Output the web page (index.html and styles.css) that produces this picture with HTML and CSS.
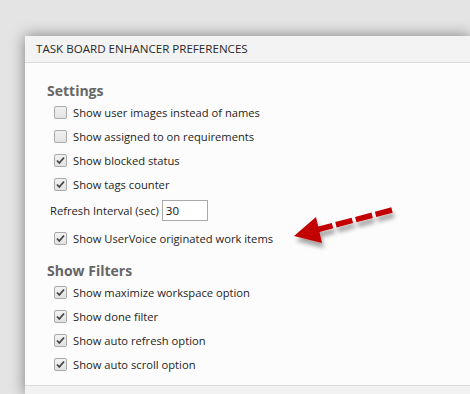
FILE: index.html
```html
<!DOCTYPE html>
<html lang="en">
<head>
    <meta charset="UTF-8">
    <title>Task Board Enhancer Preferences</title>
    <link rel="stylesheet" href="styles.css">
</head>
<body>
    <div class="dialog">
        <div class="dialog-header">TASK BOARD ENHANCER PREFERENCES</div>

        <div class="dialog-body">
            <h2>Settings</h2>
            <label class="option"><input type="checkbox"> Show user images instead of names</label>
            <label class="option"><input type="checkbox"> Show assigned to on requirements</label>
            <label class="option"><input type="checkbox" checked> Show blocked status</label>
            <label class="option"><input type="checkbox" checked> Show tags counter</label>
            <div class="interval">
                <span>Refresh Interval (sec)</span>
                <input type="text" value="30">
            </div>
            <label class="option uservoice"><input type="checkbox" checked> Show UserVoice originated work items</label>

            <h2 class="filters">Show Filters</h2>
            <label class="option"><input type="checkbox" checked> Show maximize workspace option</label>
            <label class="option"><input type="checkbox" checked> Show done filter</label>
            <label class="option"><input type="checkbox" checked> Show auto refresh option</label>
            <label class="option"><input type="checkbox" checked> Show auto scroll option</label>
        </div>

        <div class="dialog-footer"></div>
    </div>

    <!-- callout arrow -->
    <svg class="arrow" width="120" height="60" viewBox="280 195 120 60">
        <defs>
            <filter id="shadow" x="-20%" y="-40%" width="150%" height="200%">
                <feDropShadow dx="2" dy="5" stdDeviation="2.2" flood-color="#000" flood-opacity="0.35"/>
            </filter>
        </defs>
        <g filter="url(#shadow)">
            <line x1="392" y1="210" x2="318" y2="229.5" stroke="#c20000" stroke-width="5.5" stroke-dasharray="17 3.5"/>
            <polygon points="294,236 316,217 322,243" fill="#c20000"/>
        </g>
    </svg>
</body>
</html>
```

FILE: styles.css
```css
body {
    margin: 0;
    height: 394px;
    overflow: hidden;
    position: relative;
    background: #e4e4e4;
    font-family: 'Segoe UI', 'Open Sans', sans-serif;
    font-size: 11.2px;
    color: #1e1e1e;
}

.dialog {
    margin: 36px 0 0 25px;
    width: 445px;
    background: #fcfcfc;
    box-shadow: 0 0 14px rgba(0,0,0,0.45);
}

.dialog-header {
    height: 26px;
    line-height: 26px;
    padding-left: 11px;
    background: #f3f3f3;
    border-bottom: 1px solid #dcdcdc;
    color: #2a2a2a;
    font-size: 11.6px;
}

.dialog-body {
    padding: 19px 0 9px 22px;
}

h2 {
    margin: 0;
    font-size: 14px;
    line-height: 18px;
    font-weight: bold;
    color: #666;
}

h2.filters {
    margin-top: 12px;
}

.option {
    display: flex;
    align-items: center;
    height: 24px;
    padding-left: 7px;
}

.option input {
    appearance: none;
    -webkit-appearance: none;
    width: 13px;
    height: 13px;
    margin: 0 6px 0 0;
    border: 1px solid #a9a9a9;
    border-radius: 2px;
    background: linear-gradient(#f2f2f2, #e2e2e2);
    box-sizing: border-box;
}

.option input:checked {
    background: url("data:image/svg+xml,%3Csvg xmlns='http://www.w3.org/2000/svg' width='11' height='11'%3E%3Cpath d='M2 5.5 L4.3 8 L9 2.5' fill='none' stroke='%23444' stroke-width='1.8'/%3E%3C/svg%3E") center no-repeat, linear-gradient(#f2f2f2, #e2e2e2);
}

.uservoice {
    margin-top: 2px;
}

.interval {
    display: flex;
    align-items: center;
    height: 28px;
    padding-left: 3px;
}

.interval input {
    width: 46px;
    height: 21px;
    margin-left: 3px;
    padding: 0 3px;
    border: 1px solid #a9a9a9;
    box-sizing: border-box;
    font-family: inherit;
    font-size: 11.5px;
    color: #111;
    background: white;
}

.dialog-footer {
    height: 9px;
    background: #f2f2f2;
    border-top: 1px solid #dcdcdc;
}

.arrow {
    position: absolute;
    left: 280px;
    top: 195px;
}
```
